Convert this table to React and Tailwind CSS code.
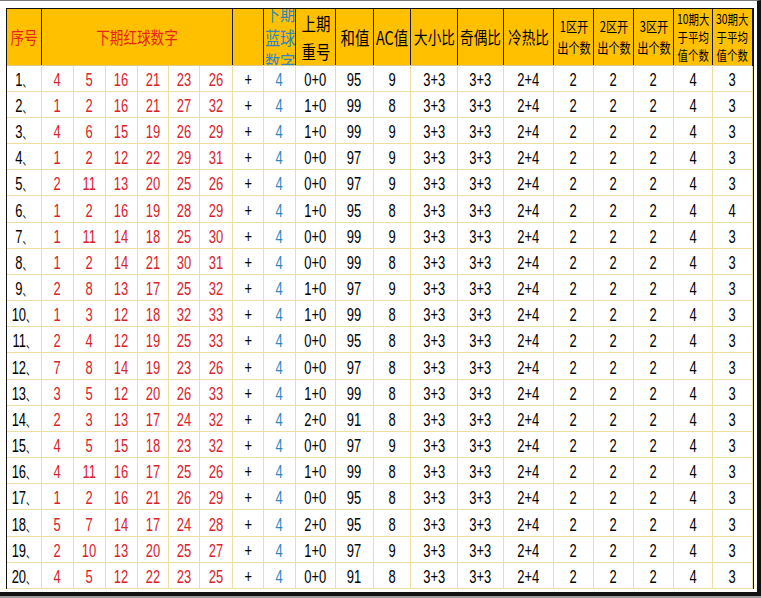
import React from 'react';

const cols =
  'grid-cols-[35px_32px_32px_32px_31px_31px_33px_31px_32px_40px_38px_37px_47px_46px_50px_40px_40px_40px_39px_40px]';

const rows = [
  [[4, 5, 16, 21, 23, 26], '0+0', 95, 9, 4, 3],
  [[1, 2, 16, 21, 27, 32], '1+0', 99, 8, 4, 3],
  [[4, 6, 15, 19, 26, 29], '1+0', 99, 9, 4, 3],
  [[1, 2, 12, 22, 29, 31], '0+0', 97, 9, 4, 3],
  [[2, 11, 13, 20, 25, 26], '0+0', 97, 9, 4, 3],
  [[1, 2, 16, 19, 28, 29], '1+0', 95, 8, 4, 4],
  [[1, 11, 14, 18, 25, 30], '0+0', 99, 9, 4, 3],
  [[1, 2, 14, 21, 30, 31], '0+0', 99, 8, 4, 3],
  [[2, 8, 13, 17, 25, 32], '1+0', 97, 9, 4, 3],
  [[1, 3, 12, 18, 32, 33], '1+0', 99, 8, 4, 3],
  [[2, 4, 12, 19, 25, 33], '0+0', 95, 8, 4, 3],
  [[7, 8, 14, 19, 23, 26], '0+0', 97, 8, 4, 3],
  [[3, 5, 12, 20, 26, 33], '1+0', 99, 8, 4, 3],
  [[2, 3, 13, 17, 24, 32], '2+0', 91, 8, 4, 3],
  [[4, 5, 15, 18, 23, 32], '0+0', 97, 9, 4, 3],
  [[4, 11, 16, 17, 25, 26], '1+0', 99, 8, 4, 3],
  [[1, 2, 16, 21, 26, 29], '0+0', 95, 8, 4, 3],
  [[5, 7, 14, 17, 24, 28], '2+0', 95, 8, 4, 3],
  [[2, 10, 13, 20, 25, 27], '1+0', 97, 9, 4, 3],
  [[4, 5, 12, 22, 23, 25], '0+0', 91, 8, 4, 3],
];

const font = "font-['Liberation_Sans_Narrow','Liberation_Sans','Noto_Sans_CJK_SC',sans-serif]";

// narrow numbers like the spreadsheet font
const Num = ({ children, color = 'text-black' }) => (
  <span className={`inline-block scale-x-[0.72] whitespace-nowrap text-[18px] leading-none ${color}`}>
    {children}
  </span>
);

const Cell = ({ children }) => (
  <div className="flex items-center justify-center border-r border-b border-[#efdf9e] pt-[3px]">
    {children}
  </div>
);

const Head = ({ children, className = '' }) => (
  <div
    className={`flex items-center justify-center overflow-hidden border-r border-[#1a1a1a] bg-[#ffc000] text-center ${className}`}
  >
    {children}
  </div>
);

const Cjk = ({ children, className = 'scale-x-[0.8]' }) => (
  <span
    className={`inline-block shrink-0 whitespace-nowrap font-['Noto_Sans_CJK_SC',sans-serif] ${className}`}
  >
    {children}
  </span>
);

export default function App() {
  return (
    <div className="h-[598px] w-[761px] bg-[#9c9c9c]">
      <div className="h-[596px] w-[761px] border-t border-r-4 border-b-4 border-[#111] border-t-[#7a7a7a] bg-white pt-[7px] pl-[6px]">
        <div className={`w-[748px] border-t border-l border-r-2 border-[#111] ${font}`}>
          {/* Header */}
          <div className={`grid ${cols} h-[57px] border-b border-[#d9c98a]`}>
            <Head>
              <Cjk className="scale-x-[0.8] text-[17px] text-[#e8231c]">序号</Cjk>
            </Head>
            <Head className="col-span-6">
              <Cjk className="scale-x-[0.8] text-[17px] text-[#e8231c]">下期红球数字</Cjk>
            </Head>
            <Head />
            <Head>
              <Cjk className="scale-x-[0.84] text-[18px] leading-[24px] text-[#2f86c0]">
                下期<br />蓝球<br />数字
              </Cjk>
            </Head>
            <Head>
              <Cjk className="scale-x-[0.8] text-[18px] leading-[28px]">
                上期<br />重号
              </Cjk>
            </Head>
            <Head>
              <Cjk className="scale-x-[0.8] text-[18px]">和值</Cjk>
            </Head>
            <Head>
              <Cjk className="scale-x-[0.8] text-[18px]">AC值</Cjk>
            </Head>
            <Head>
              <Cjk className="scale-x-[0.8] text-[17px]">大小比</Cjk>
            </Head>
            <Head>
              <Cjk className="scale-x-[0.8] text-[17px]">奇偶比</Cjk>
            </Head>
            <Head>
              <Cjk className="scale-x-[0.8] text-[17px]">冷热比</Cjk>
            </Head>
            {['1区开', '2区开', '3区开'].map((t) => (
              <Head key={t}>
                <Cjk className="scale-x-[0.8] text-[14px] leading-[21px]">
                  {t}
                  <br />
                  出个数
                </Cjk>
              </Head>
            ))}
            {['10期大', '30期大'].map((t) => (
              <Head key={t}>
                <Cjk className="scale-x-[0.8] text-[13px] leading-[18px]">
                  {t}
                  <br />
                  于平均
                  <br />
                  值个数
                </Cjk>
              </Head>
            ))}
          </div>

          {/* Body */}
          {rows.map(([reds, repeat, sum, ac, ten, thirty], i) => (
            <div key={i} className={`grid ${cols} ${i % 6 === 5 ? 'h-[27px]' : 'h-[26px]'}`}>
              <Cell>
                <Num>
                  {i + 1}
                  <span className="text-[13px]">、</span>
                </Num>
              </Cell>
              {reds.map((n, j) => (
                <Cell key={j}>
                  <Num color="text-[#d8232b]">{n}</Num>
                </Cell>
              ))}
              <Cell>
                <Num>+</Num>
              </Cell>
              <Cell>
                <Num color="text-[#2f86c0]">4</Num>
              </Cell>
              <Cell>
                <Num>{repeat}</Num>
              </Cell>
              <Cell>
                <Num>{sum}</Num>
              </Cell>
              <Cell>
                <Num>{ac}</Num>
              </Cell>
              <Cell>
                <Num>3+3</Num>
              </Cell>
              <Cell>
                <Num>3+3</Num>
              </Cell>
              <Cell>
                <Num>2+4</Num>
              </Cell>
              <Cell>
                <Num>2</Num>
              </Cell>
              <Cell>
                <Num>2</Num>
              </Cell>
              <Cell>
                <Num>2</Num>
              </Cell>
              <Cell>
                <Num>{ten}</Num>
              </Cell>
              <Cell>
                <Num>{thirty}</Num>
              </Cell>
            </div>
          ))}
        </div>
      </div>
    </div>
  );
}
